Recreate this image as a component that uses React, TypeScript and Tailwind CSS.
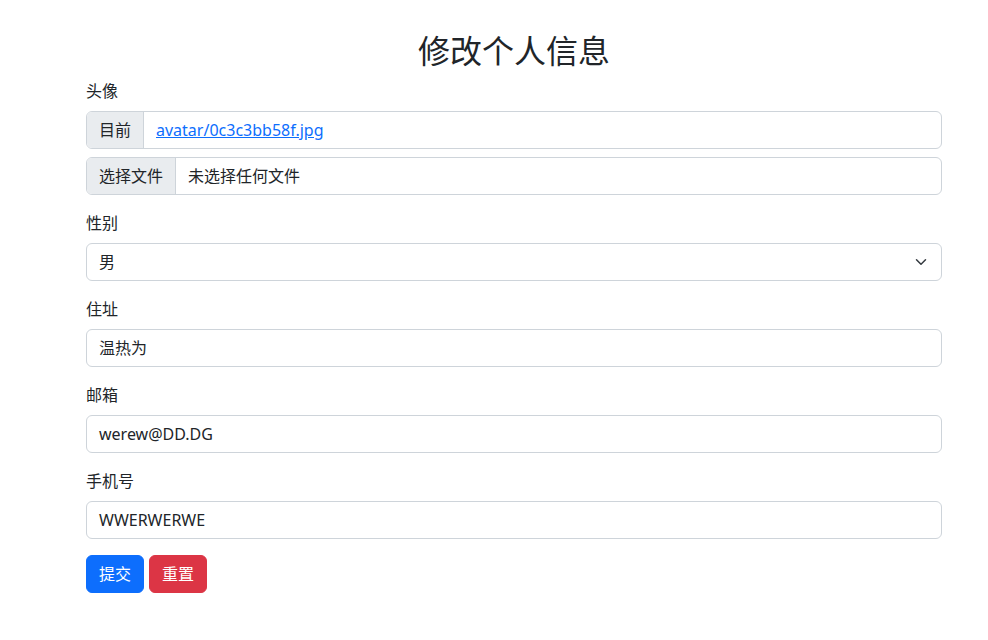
const font = { fontFamily: '"Segoe UI", "Noto Sans", "Noto Sans CJK SC", sans-serif' }

function Field({ label, value }: { label: string; value: string }) {
	return (
		<div className="mb-4">
			<div className="mb-2 leading-6">{label}</div>
			<div className="flex h-[38px] items-center rounded-[6px] border border-[#ced4da] bg-white px-3 leading-6">
				{value}
			</div>
		</div>
	)
}

export default function App() {
	return (
		<div className="min-h-[640px] bg-white text-[16px] text-[#212529]" style={font}>
			<div className="ml-[86px] w-[856px] pt-8">
				<h2 className="mb-[9px] text-center text-[32px] leading-[38px] font-normal">修改个人信息</h2>

				<div className="mb-4">
					<div className="mb-2 leading-6">头像</div>
					<div className="mb-2 flex h-[38px] rounded-[6px] border border-[#ced4da]">
						<span className="flex items-center rounded-l-[5px] border-r border-[#ced4da] bg-[#e9ecef] px-3">目前</span>
						<a href="#" className="flex items-center px-3 text-[#0d6efd] underline">
							avatar/0c3c3bb58f.jpg
						</a>
					</div>
					<div className="flex h-[38px] rounded-[6px] border border-[#ced4da]">
						<span className="flex items-center rounded-l-[5px] border-r border-[#ced4da] bg-[#e9ecef] px-3">选择文件</span>
						<span className="flex items-center px-3">未选择任何文件</span>
					</div>
				</div>

				<div className="mb-4">
					<div className="mb-2 leading-6">性别</div>
					<div className="flex h-[38px] items-center justify-between rounded-[6px] border border-[#ced4da] pr-3 pl-3">
						<span>男</span>
						<svg width="16" height="12" viewBox="0 0 16 16" fill="none" stroke="#343a40" strokeWidth="2" strokeLinecap="round" strokeLinejoin="round">
							<path d="m2 5 6 6 6-6" />
						</svg>
					</div>
				</div>

				<Field label="住址" value="温热为" />
				<Field label="邮箱" value="werew@DD.DG" />
				<Field label="手机号" value="WWERWERWE" />

				<div className="flex gap-[5px]">
					<button className="h-[38px] rounded-[6px] border border-[#0d6efd] bg-[#0d6efd] px-3 text-white">提交</button>
					<button className="h-[38px] rounded-[6px] border border-[#dc3545] bg-[#dc3545] px-3 text-white">重置</button>
				</div>
			</div>
		</div>
	)
}
